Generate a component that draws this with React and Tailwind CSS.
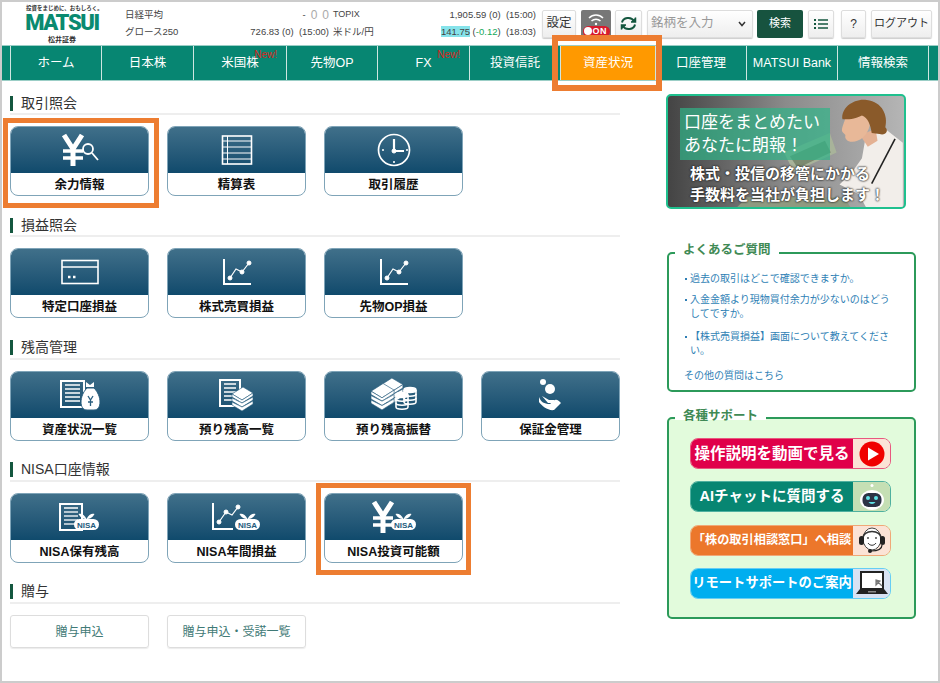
import React from 'react';

const fontJa = { fontFamily: '"Liberation Sans", "Noto Sans CJK JP", sans-serif' };

const navItems = [
  { label: 'ホーム', width: 'w-[91px]' },
  { label: '日本株', width: 'w-[92px]' },
  { label: '米国株', width: 'w-[93px]', isNew: 'right-[9px]' },
  { label: '先物OP', width: 'w-[91px]' },
  { label: 'FX', width: 'w-[92px]', isNew: 'right-[9px]' },
  { label: '投資信託', width: 'w-[91px]' },
  { label: '資産状況', width: 'w-[95px]', active: true },
  { label: '口座管理', width: 'w-[91px]' },
  { label: 'MATSUI Bank', width: 'w-[91px]' },
  { label: '情報検索', width: 'w-[91px]' },
];

const YenStroke = ({ x = 0, y = 0, s = 1 }) => (
  <g transform={`translate(${x} ${y}) scale(${s})`} stroke="#fff" fill="none" strokeWidth="5">
    <path d="M3 1 L12 15 L21 1" />
    <path d="M12 14 V32" />
    <path d="M2 17 H22" strokeWidth="3.5" />
    <path d="M2 24 H22" strokeWidth="3.5" />
  </g>
);

const DocLines = ({ x = 0, y = 0, w = 22, h = 27 }) => (
  <g>
    <rect x={x + 1} y={y + 1} width={w} height={h} fill="none" stroke="#fff" strokeWidth="2" />
    {[5, 9, 13, 17, 21].map((d) => (
      <path key={d} d={`M${x + 5} ${y + d} H${x + w - 3}`} stroke="#fff" strokeWidth="1.3" />
    ))}
  </g>
);

const Sprout = ({ x, y, w = 32 }) => (
  <g transform={`translate(${x} ${y})`}>
    <path d={`M${(w - 7) / 2} 6 C${(w - 7) / 2 - 2} 1 ${(w - 7) / 2 - 6} 0 ${(w - 7) / 2 - 8} 1 C${(w - 7) / 2 - 6} 5 ${(w - 7) / 2 - 3} 6 ${(w - 7) / 2} 6 Z`} fill="#fff" />
    <path d={`M${(w - 7) / 2} 6 C${(w - 7) / 2 + 2} 1 ${(w - 7) / 2 + 6} 0 ${(w - 7) / 2 + 8} 1 C${(w - 7) / 2 + 6} 5 ${(w - 7) / 2 + 3} 6 ${(w - 7) / 2} 6 Z`} fill="#fff" />
    <rect x="0" y="6" width={w - 7} height="11" rx="5.5" fill="#fff" />
    <text x={(w - 7) / 2} y="14.5" textAnchor="middle" fontSize="8" fontWeight="700" fill="#1e5b7c" fontFamily="Liberation Sans">
      NISA
    </text>
  </g>
);

const MoneyBills = ({ x, y }) => (
  <g transform={`translate(${x} ${y})`} fill="#fff" stroke="#2a5f7f" strokeWidth="0.6">
    <path d="M0 10 L11 3 L21 9 L10 16 Z" />
    <path d="M0 10 V13 L10 19 L21 12 V9 L10 16 Z" />
    <path d="M0 14 V17 L10 23 L21 16 V13 L10 19 Z" />
    <path d="M0 18 V21 L10 27 L21 20 V17 L10 23 Z" />
  </g>
);

const Coins = ({ x, y }) => (
  <g transform={`translate(${x} ${y})`} fill="none" stroke="#fff" strokeWidth="1.6">
    <ellipse cx="7" cy="3" rx="6" ry="2.5" fill="#fff" />
    <path d="M1 3 V7 C1 10 13 10 13 7 V3" />
    <path d="M1 7 V11 C1 14 13 14 13 11 V7" />
    <path d="M1 11 V15 C1 18 13 18 13 15 V11" />
  </g>
);

const icons = {
  yenSearch: (
    <svg width="40" height="36" viewBox="0 0 40 36">
      <YenStroke x={1} y={2} />
      <circle cx="28" cy="17" r="5" fill="none" stroke="#fff" strokeWidth="1.8" />
      <path d="M32 21 L38 28" stroke="#fff" strokeWidth="1.8" />
    </svg>
  ),
  table: (
    <svg width="32" height="32" viewBox="0 0 32 32" fill="none" stroke="#fff">
      <rect x="1.5" y="2" width="29" height="28" strokeWidth="1.6" />
      <path d="M1.5 7 H30.5 M1.5 13 H30.5 M1.5 19 H30.5 M1.5 25 H30.5 M6.5 2 V30" strokeWidth="1" />
    </svg>
  ),
  clock: (
    <svg width="36" height="36" viewBox="0 0 36 36" fill="none" stroke="#fff">
      <circle cx="18" cy="18" r="15.5" strokeWidth="1.7" />
      <path d="M18 7 V19 H28" strokeWidth="2.2" />
      <circle cx="18" cy="19" r="2" fill="#fff" />
      <path d="M6 18 H8 M18 29 V31 M30 18 H32" strokeWidth="1.6" />
    </svg>
  ),
  card: (
    <svg width="38" height="26" viewBox="0 0 38 26" fill="none" stroke="#fff">
      <rect x="1" y="1.5" width="36" height="23" strokeWidth="1.6" />
      <path d="M1 8 H37" strokeWidth="1.3" />
      <path d="M7 18 H9.5 M12 18 H14.5" strokeWidth="2.4" />
    </svg>
  ),
  chart: (
    <svg width="30" height="28" viewBox="0 0 30 28" fill="none" stroke="#fff">
      <path d="M2 1 V26 H29" strokeWidth="2" />
      <path d="M8 20 L14 11 L20 14 L27 5" strokeWidth="1.2" />
      <circle cx="8" cy="20" r="2" fill="#fff" />
      <circle cx="20" cy="14" r="2" fill="#fff" />
      <circle cx="27" cy="5" r="2" fill="#fff" />
    </svg>
  ),
  docBag: (
    <svg width="40" height="32" viewBox="0 0 40 32">
      <DocLines x={0} y={1} w={23} h={26} />
      <path d="M27 9 C19 17 19 31 27 31 H34 C42 31 42 17 34 9 Z" fill="#fff" stroke="#2a5f7f" />
      <path d="M26 3 L30 6 L34 3 V8 H26 Z" fill="#fff" />
      <path d="M28 17 L30.5 21 L33 17 M30.5 21 V27 M28 23 H33" stroke="#2a5f7f" strokeWidth="1.3" fill="none" />
    </svg>
  ),
  docBills: (
    <svg width="36" height="34" viewBox="0 0 36 34">
      <DocLines x={0} y={1} w={20} h={26} />
      <MoneyBills x={13} y={6} />
    </svg>
  ),
  stacks: (
    <svg width="46" height="34" viewBox="0 0 46 34">
      <g transform="scale(1.1)">
        <MoneyBills x={8} y={-3} />
        <MoneyBills x={0} y={2} />
      </g>
      <Coins x={24} y={14} />
      <Coins x={32} y={9} />
    </svg>
  ),
  hand: (
    <svg width="26" height="34" viewBox="0 0 26 34" fill="#fff">
      <circle cx="5" cy="4" r="3" />
      <circle cx="12" cy="11" r="5" />
      <path d="M1 19 C3 24 6 26 12 26 L17 22 C19 21 21 23 23 25 L16 32 C10 33 4 28 1 24 Z" />
      <path d="M4 18 L11 22 H17 L15 25 H10 Z" />
    </svg>
  ),
  nisaDoc: (
    <svg width="42" height="30" viewBox="0 0 42 30">
      <DocLines x={0} y={1} w={22} h={26} />
      <Sprout x={15} y={11} w={32} />
    </svg>
  ),
  nisaChart: (
    <svg width="52" height="30" viewBox="0 0 52 30" fill="none" stroke="#fff">
      <path d="M2 1 V27 H22" strokeWidth="2" />
      <path d="M8 20 L15 10 L21 13 L27 5" strokeWidth="1.2" />
      <circle cx="8" cy="20" r="2" fill="#fff" />
      <circle cx="15" cy="10" r="2" fill="#fff" />
      <circle cx="27" cy="5" r="2" fill="#fff" />
      <g stroke="none">
        <Sprout x={24} y={11} w={32} />
      </g>
    </svg>
  ),
  nisaYen: (
    <svg width="48" height="34" viewBox="0 0 48 34">
      <YenStroke x={1} y={1} />
      <Sprout x={21} y={13} w={32} />
    </svg>
  ),
};

const sections = [
  {
    title: '取引照会',
    gap: 'mb-[22px]',
    titleHeight: 'h-[19px]',
    items: [
      { label: '余力情報', icon: 'yenSearch' },
      { label: '精算表', icon: 'table' },
      { label: '取引履歴', icon: 'clock' },
    ],
  },
  {
    title: '損益照会',
    gap: 'mb-[22px]',
    titleHeight: 'h-[19px]',
    items: [
      { label: '特定口座損益', icon: 'card' },
      { label: '株式売買損益', icon: 'chart' },
      { label: '先物OP損益', icon: 'chart' },
    ],
  },
  {
    title: '残高管理',
    gap: 'mb-[21px]',
    titleHeight: 'h-[20px]',
    items: [
      { label: '資産状況一覧', icon: 'docBag' },
      { label: '預り残高一覧', icon: 'docBills' },
      { label: '預り残高振替', icon: 'stacks' },
      { label: '保証金管理', icon: 'hand' },
    ],
  },
  {
    title: 'NISA口座情報',
    gap: 'mb-[21px]',
    titleHeight: 'h-[20px]',
    items: [
      { label: 'NISA保有残高', icon: 'nisaDoc' },
      { label: 'NISA年間損益', icon: 'nisaChart' },
      { label: 'NISA投資可能額', icon: 'nisaYen' },
    ],
  },
];

const SectionTitle = ({ height, children }) => (
  <div className={`${height} border-b-2 border-[#eeeeee] mb-[11px]`}>
    <div className="flex items-center h-[15px] border-l-[3px] border-[#14573f] pl-[8px] text-[14px] leading-[15px] text-[#333333]">
      {children}
    </div>
  </div>
);

const MenuButton = ({ label, icon }) => (
  <div className="w-[139px] h-[70px] rounded-[8px] border border-[#7fa4b8] overflow-hidden bg-white flex flex-col">
    <div className="h-[46px] flex items-center justify-center bg-gradient-to-b from-[#40708a] to-[#0f4a6c]">
      {icons[icon]}
    </div>
    <div className="flex-1 pt-[2px] flex items-center justify-center text-[12.5px] font-bold text-[#111111]">{label}</div>
  </div>
);

const HeaderButton = ({ className, children }) => (
  <div
    className={`h-[28px] flex items-center rounded-[2px] border border-[#dddddd] bg-gradient-to-b from-white to-[#eeeeee] shadow-[0_1px_1px_rgba(0,0,0,0.2)] text-[#333333] ${className}`}
  >
    {children}
  </div>
);

const Banner = () => (
  <div className="relative w-[240px] h-[115px] rounded-[5px] border-2 border-[#1fc08e] overflow-hidden bg-gradient-to-r from-[#444444] via-[#8b8b8b] to-[#b5b5b5]">
    <svg className="absolute inset-0" width="236" height="111" viewBox="0 0 240 114">
      <path d="M118 58 L165 38 L172 58 L128 78 Z" fill="#a8b39a" />
      <path d="M124 62 L160 46 L166 58 L132 74 Z" fill="#7c8a70" />
      <path d="M70 114 L80 104 H180 L186 114 Z" fill="#8f9a80" />
      <path d="M202 41 L222 34 L240 48 V114 H202 L195 101 L175 91 L188 78 L198 64 Z" fill="#f2eeea" />
      <path d="M232 44 L208 90" stroke="#222" strokeWidth="1.6" />
      <path d="M196 40 L212 34 L214 46 L204 52 Z" fill="#e4b193" />
      <path d="M180 26 C178 32 176 36 179 38 L181 40 C180 44 183 47 188 47 C196 47 204 40 206 30 C205 20 198 14 192 15 C186 16 182 20 180 26 Z" fill="#e8b898" />
      <path d="M178 24 C176 12 190 2 203 4 C219 6 225 20 222 32 C226 36 222 41 216 39 L208 38 C207 30 204 22 198 20 C190 24 184 24 178 24 Z" fill="#8a5a2a" />
    </svg>
    <div className="relative flex flex-col pl-[12px] pt-[12px]">
      <div className="w-[150px] h-[52px] bg-[#2fb488]/70 pl-[4px] pt-[3px] text-[17px] leading-[23px] text-white">
        口座をまとめたい
        <br />
        あなたに朗報！
      </div>
      <div className="mt-[3px] pl-[10px] whitespace-nowrap text-[15px] leading-[21px] font-bold text-white [text-shadow:0_0_2px_#222,0_0_2px_#222]">
        株式・投信の移管にかかる
        <br />
        手数料を当社が負担します！
      </div>
    </div>
  </div>
);

const supportLinks = [
  {
    label: '操作説明を動画で見る',
    text: 'text-[15.5px]',
    color: 'bg-[#e0004a]',
    border: 'border-[#e8577f]',
    side: 'bg-[#fbe3d6]',
    icon: (
      <svg width="26" height="26" viewBox="0 0 26 26">
        <circle cx="13" cy="13" r="12.5" fill="#f00000" />
        <path d="M9 6.5 L20 13 L9 19.5 Z" fill="#fff" />
      </svg>
    ),
  },
  {
    label: 'AIチャットに質問する',
    text: 'text-[14.5px]',
    color: 'bg-[#078672]',
    border: 'border-[#4fb09f]',
    side: 'bg-[#c5dfb4]',
    icon: (
      <svg width="26" height="28" viewBox="0 0 26 28">
        <circle cx="13" cy="2.5" r="1.5" fill="#fff" />
        <ellipse cx="13" cy="17" rx="12" ry="10" fill="#fff" />
        <rect x="3.5" y="10" width="19" height="14" rx="6" fill="#2c3345" />
        <circle cx="9" cy="15" r="2" fill="#5fe3e8" />
        <circle cx="17" cy="15" r="2" fill="#5fe3e8" />
        <path d="M9.5 19 C11 21.5 15 21.5 16.5 19 Z" fill="#5fe3e8" />
      </svg>
    ),
  },
  {
    label: '「株の取引相談窓口」へ相談',
    text: 'text-[12.2px]',
    color: 'bg-[#ec772b]',
    border: 'border-[#f0a877]',
    side: 'bg-[#fbe3d6]',
    icon: (
      <svg width="28" height="30" viewBox="0 0 28 30" fill="none">
        <ellipse cx="14" cy="14" rx="9" ry="11" fill="#fff" stroke="#444" strokeWidth="1" />
        <path d="M5 14 C4 4 24 4 23 14" stroke="#333" strokeWidth="1.5" />
        <rect x="1" y="11" width="5" height="9" rx="2.5" fill="#222" />
        <rect x="22" y="11" width="5" height="9" rx="2.5" fill="#222" />
        <path d="M24 20 C24 25 18 26 13 26" stroke="#222" strokeWidth="1.2" />
        <circle cx="12" cy="26" r="2" fill="#222" />
        <path d="M10 12 v2 M18 12 v2" stroke="#333" strokeWidth="1.3" />
        <path d="M10 18 C12 21 16 21 18 18" stroke="#333" strokeWidth="1" />
      </svg>
    ),
  },
  {
    label: 'リモートサポートのご案内',
    text: 'text-[13.3px]',
    color: 'bg-[#00aeef]',
    border: 'border-[#66cdf4]',
    side: 'bg-[#d8e2f3]',
    icon: (
      <svg width="32" height="24" viewBox="0 0 32 24">
        <rect x="5" y="1" width="22" height="17" fill="#fff" stroke="#222" strokeWidth="2" />
        <path d="M20 9 L26 15 M20 9 L20 14 L24 10 Z" stroke="#777" strokeWidth="1.2" fill="#999" />
        <path d="M0 23 L4 18 H28 L32 23 Z" fill="#222" />
        <rect x="12" y="20" width="8" height="1.5" fill="#888" />
      </svg>
    ),
  },
];

const SupportLink = ({ item }) => (
  <div className={`w-[201px] h-[31px] rounded-[8px] border ${item.border} overflow-hidden flex`}>
    <div className={`flex-1 flex items-center justify-center whitespace-nowrap font-bold text-white ${item.text} ${item.color}`}>
      {item.label}
    </div>
    <div className={`w-[37px] flex items-center justify-center ${item.side}`}>{item.icon}</div>
  </div>
);

const faq = [
  { q: '過去の取引はどこで確認できますか。', gap: '' },
  { q: '入金金額より現物買付余力が少ないのはどうしてですか。', gap: '' },
  { q: '【株式売買損益】画面について教えてください。', gap: 'mt-[2px]' },
];

export default function App() {
  return (
    <div className="relative w-[940px] h-[683px] border-2 border-[#cccccc] bg-white overflow-hidden" style={fontJa}>
      {/* ヘッダー */}
      <div className="flex items-center h-[43px]">
        <div className="w-[96px] pl-[24px] shrink-0 flex flex-col items-center">
          <div className="mb-[2px] w-[72px] whitespace-nowrap text-center text-[5.5px] leading-[8px] font-bold text-[#333333]">
            投資をまじめに、おもしろく。
          </div>
          <div className="h-[18px] text-[22px] leading-[18px] font-black tracking-[-1.4px] text-[#0a8a70]" style={{ fontFamily: 'Roboto, sans-serif' }}>
            MATSUI
          </div>
          <div className="mt-[3px] text-[7px] leading-[9px] font-bold text-[#333333]">松井証券</div>
        </div>
        <div className="ml-[27px] w-[411px] shrink-0 grid grid-cols-[90px_114px_64px_143px] auto-rows-[17px] items-center text-[9.5px] text-[#444444] whitespace-nowrap">
          <div>日経平均</div>
          <div className="flex justify-end gap-[5px] items-center">
            <span>-</span>
            <span className="text-[12px] leading-[12px] text-[#aaaaaa]">0</span>
            <span className="text-[12px] leading-[12px] text-[#aaaaaa]">0</span>
          </div>
          <div className="pl-[4px] text-[9px]">TOPIX</div>
          <div className="text-right">1,905.59 (0) &nbsp;(15:00)</div>
          <div>グロース250</div>
          <div className="text-right">726.83 (0) &nbsp;(15:00)</div>
          <div className="pl-[4px]">米ドル/円</div>
          <div className="text-right">
            <span className="bg-[#86e3ea]">141.75</span> (<span className="text-[#14a85a]">-0.12</span>) &nbsp;(18:03)
          </div>
        </div>
        <div className="ml-[6px] flex items-center">
          <HeaderButton className="w-[34px] justify-center text-[12.5px]">設定</HeaderButton>
          <div className="ml-[5px] w-[30px] h-[28px] rounded-[2px] bg-[#777777] flex flex-col items-center justify-end pb-[1px]">
            <svg width="16" height="13" viewBox="0 0 16 13" fill="none" stroke="#fff" strokeWidth="1.5">
              <path d="M1 5 C5 1 11 1 15 5" />
              <path d="M3.5 8 C6 5.5 10 5.5 12.5 8" />
              <circle cx="8" cy="11" r="1.2" fill="#fff" stroke="none" />
            </svg>
            <div className="w-[27px] h-[11px] rounded-full bg-[#d81b2c] flex items-center pl-[1px] gap-[1px]">
              <span className="w-[8px] h-[8px] rounded-full bg-white shrink-0"></span>
              <span className="text-[9px] leading-[11px] font-bold tracking-[0.5px] text-white">ON</span>
            </div>
          </div>
          <HeaderButton className="ml-[4px] w-[27px] justify-center">
            <svg width="17" height="17" viewBox="0 0 17 17" fill="none" stroke="#14573f" strokeWidth="2">
              <path d="M2 7.5 C3 2.5 11 1 14 6" />
              <path d="M15 9.5 C14 14.5 6 16 3 11" />
              <path d="M15.5 2.5 V7 H11" strokeWidth="1.5" fill="#14573f" />
              <path d="M1.5 14.5 V10 H6" strokeWidth="1.5" fill="#14573f" />
            </svg>
          </HeaderButton>
          <HeaderButton className="ml-[5px] w-[106px] justify-between pl-[3px] pr-[6px] text-[12.5px] !text-[#999999]">
            <span>銘柄を入力</span>
            <svg width="8" height="6" viewBox="0 0 8 6" fill="none" stroke="#333333" strokeWidth="1.5">
              <path d="M1 1 L4 4.5 L7 1" />
            </svg>
          </HeaderButton>
          <div className="ml-[4px] w-[46px] h-[28px] rounded-[2px] bg-[#17533f] flex items-center justify-center text-[11px] text-white">検索</div>
          <HeaderButton className="ml-[5px] w-[26px] justify-center">
            <svg width="14" height="12" viewBox="0 0 14 12" fill="#14573f">
              <path d="M0 1 h2 v2 h-2 Z M0 5 h2 v2 h-2 Z M0 9 h2 v2 h-2 Z M4 1.3 h10 v1.4 h-10 Z M4 5.3 h10 v1.4 h-10 Z M4 9.3 h10 v1.4 h-10 Z" />
            </svg>
          </HeaderButton>
          <HeaderButton className="ml-[7px] w-[25px] justify-center text-[12px]">?</HeaderButton>
          <HeaderButton className="ml-[5px] w-[61px] justify-center text-[11px]">ログアウト</HeaderButton>
        </div>
      </div>

      {/* グローバルナビ */}
      <div className="flex h-[36px] pl-[8px] bg-[#078672] border-t border-b border-white/60">
        {navItems.map((item) => (
          <div
            key={item.label}
            className={`relative pt-[1px] flex items-center justify-center border-l border-[#cfe6e1] whitespace-nowrap text-[12.5px] text-white ${item.width} ${
              item.active ? 'bg-[#ff9900]' : ''
            }`}
          >
            {item.label}
            {item.isNew && (
              <span className={`absolute top-[4px] text-[10px] leading-[10px] text-[#d9261e] ${item.isNew}`}>New!</span>
            )}
          </div>
        ))}
        <div className="border-l border-[#cfe6e1]"></div>
      </div>

      <div className="flex">
        {/* 左カラム */}
        <div className="w-[610px] ml-[8px] pt-[15px] shrink-0">
          {sections.map((section) => (
            <div key={section.title} className={section.gap}>
              <SectionTitle height={section.titleHeight}>{section.title}</SectionTitle>
              <div className="flex gap-[18px]">
                {section.items.map((item) => (
                  <MenuButton key={item.label} label={item.label} icon={item.icon} />
                ))}
              </div>
            </div>
          ))}
          <SectionTitle height="h-[20px]">贈与</SectionTitle>
          <div className="flex gap-[18px]">
            {['贈与申込', '贈与申込・受諾一覧'].map((label) => (
              <div
                key={label}
                className="w-[139px] h-[33px] rounded-[3px] border border-[#dddddd] shadow-[0_1px_1px_rgba(0,0,0,0.08)] flex items-center justify-center text-[12px] text-[#3f7a76]"
              >
                {label}
              </div>
            ))}
          </div>
        </div>

        {/* 右カラム */}
        <div className="ml-[46px] pt-[13px] w-[250px] shrink-0">
          <Banner />
          <fieldset className="mt-[35px] ml-[1px] w-[249px] rounded-[5px] border-2 border-[#2c9a5a] pl-[15px] pr-[20px] pb-[7px]">
            <legend className="ml-[-9px] px-[8px] h-[18px] text-[12.5px] leading-[12px] font-bold text-[#3f8a55]">よくあるご質問</legend>
            <ul className="pt-[10px] flex flex-col gap-[7px] text-[10px] leading-[14px] text-[#2f7fb5]">
              {faq.map((item) => (
                <li key={item.q} className={`flex ${item.gap}`}>
                  <span className="w-[6px] shrink-0 pt-[6px]">
                    <span className="block w-[2px] h-[2px] ml-[1px] bg-[#2f7fb5]"></span>
                  </span>
                  <span>{item.q}</span>
                </li>
              ))}
              <li className="mt-[4px]">その他の質問はこちら</li>
            </ul>
          </fieldset>
          <fieldset className="mt-[16px] ml-[1px] w-[249px] rounded-[5px] border-2 border-[#2c9a5a] bg-[#e2fbdc] pl-[21px] pb-[18px]">
            <legend className="ml-[-15px] px-[8px] pt-[2px] h-[20px] text-[12.5px] leading-[12px] font-bold text-[#3f8a55] bg-[linear-gradient(white_60%,transparent_60%)]">各種サポート</legend>
            <div className="pt-[10px] flex flex-col gap-[12.3px]">
              {supportLinks.map((item) => (
                <SupportLink key={item.label} item={item} />
              ))}
            </div>
          </fieldset>
        </div>
      </div>

      {/* 注釈枠 */}
      <div className="absolute left-[1px] top-[116px] w-[156px] h-[90px] border-[5px] border-[#ed7d31]"></div>
      <div className="absolute left-[314px] top-[481px] w-[155px] h-[92px] border-[5px] border-[#ed7d31]"></div>
      <div className="absolute left-[550px] top-[33px] w-[110px] h-[56px] border-[6px] border-[#ed7d31]"></div>
    </div>
  );
}
